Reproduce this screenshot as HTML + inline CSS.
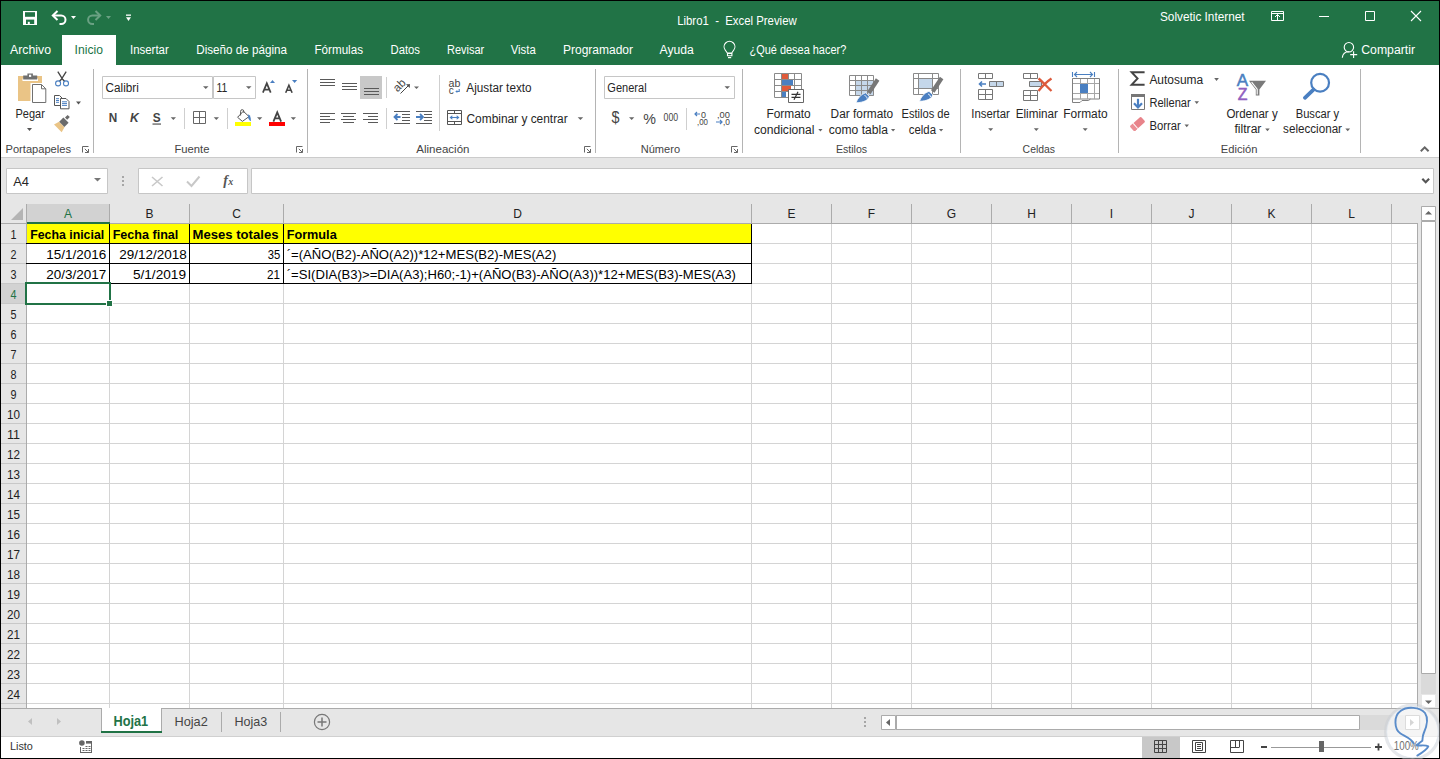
<!DOCTYPE html>
<html><head><meta charset="utf-8"><title>Libro1 - Excel Preview</title>
<style>html,body{margin:0;padding:0;width:1440px;height:759px;overflow:hidden;background:#000}
svg{display:block} text{font-family:"Liberation Sans",sans-serif;white-space:pre}</style></head>
<body><svg width="1440" height="759" viewBox="0 0 1440 759">
<rect x="0" y="0" width="1440" height="759" fill="#000" />
<rect x="1" y="1" width="1438" height="757" fill="#ffffff" />
<rect x="1" y="1" width="1438" height="64" fill="#217346" />
<rect x="62" y="35" width="54" height="30" fill="#ffffff" />
<rect x="1" y="157" width="1438" height="1" fill="#cbcbcb" />
<rect x="1" y="158" width="1438" height="579" fill="#e6e6e6" />
<rect x="23" y="11" width="14" height="14" fill="#fff" />
<rect x="25" y="12.2" width="10" height="4.6" fill="#217346" />
<rect x="26" y="19.6" width="8.2" height="4.4" fill="#217346" />
<rect x="27.8" y="21.8" width="2" height="2.2" fill="#fff" />
<path d="M57.5 11L52.8 15.5L57.5 20" stroke="#fff" fill="none" stroke-width="2" />
<path d="M53 15.5H61.2A4.3 4.3 0 0 1 61.2 24.1H59.5" stroke="#fff" fill="none" stroke-width="2" />
<path d="M71 16h5l-2.5 3z" stroke="none" fill="#fff" stroke-width="1" />
<path d="M95.5 11L100.2 15.5L95.5 20" stroke="#6aa183" fill="none" stroke-width="2" />
<path d="M100 15.5H92.4A4.3 4.3 0 0 0 92.4 24.1H94" stroke="#6aa183" fill="none" stroke-width="2" />
<path d="M106 16h5l-2.5 3z" stroke="none" fill="#6aa183" stroke-width="1" />
<rect x="126" y="14.5" width="5" height="1.3" fill="#fff" />
<path d="M126 17.3h5l-2.5 3.7z" stroke="none" fill="#fff" stroke-width="1" />
<text x="677.2" y="25" font-size="12" fill="#fff" font-weight="400" text-anchor="start" textLength="119.5" lengthAdjust="spacingAndGlyphs" >Libro1  -  Excel Preview</text>
<text x="1160" y="21" font-size="12" fill="#fff" font-weight="400" text-anchor="start" textLength="84.6" lengthAdjust="spacingAndGlyphs" >Solvetic Internet</text>
<path d="M1271.5 11.5h12v9h-12z" stroke="#fff" fill="none" stroke-width="1" />
<rect x="1272" y="13" width="12" height="1" fill="#fff" />
<path d="M1277.5 20v-5.5M1275 17l2.5-2.5 2.5 2.5" stroke="#fff" fill="none" stroke-width="1" />
<rect x="1319" y="16" width="10" height="1" fill="#fff" />
<path d="M1365.5 11.5h9v9h-9z" stroke="#fff" fill="none" stroke-width="1" />
<path d="M1411 11L1421 21M1421 11L1411 21" stroke="#fff" fill="none" stroke-width="1.1" />
<text x="10" y="54" font-size="12.5" fill="#fff" font-weight="400" text-anchor="start" textLength="41" lengthAdjust="spacingAndGlyphs" >Archivo</text>
<text x="130" y="54" font-size="12.5" fill="#fff" font-weight="400" text-anchor="start" textLength="38.75" lengthAdjust="spacingAndGlyphs" >Insertar</text>
<text x="196.25" y="54" font-size="12.5" fill="#fff" font-weight="400" text-anchor="start" textLength="90.75" lengthAdjust="spacingAndGlyphs" >Diseño de página</text>
<text x="314.5" y="54" font-size="12.5" fill="#fff" font-weight="400" text-anchor="start" textLength="48.5" lengthAdjust="spacingAndGlyphs" >Fórmulas</text>
<text x="390.5" y="54" font-size="12.5" fill="#fff" font-weight="400" text-anchor="start" textLength="29.5" lengthAdjust="spacingAndGlyphs" >Datos</text>
<text x="447" y="54" font-size="12.5" fill="#fff" font-weight="400" text-anchor="start" textLength="37.25" lengthAdjust="spacingAndGlyphs" >Revisar</text>
<text x="510.75" y="54" font-size="12.5" fill="#fff" font-weight="400" text-anchor="start" textLength="25" lengthAdjust="spacingAndGlyphs" >Vista</text>
<text x="563" y="54" font-size="12.5" fill="#fff" font-weight="400" text-anchor="start" textLength="70" lengthAdjust="spacingAndGlyphs" >Programador</text>
<text x="659.5" y="54" font-size="12.5" fill="#fff" font-weight="400" text-anchor="start" textLength="34.25" lengthAdjust="spacingAndGlyphs" >Ayuda</text>
<text x="74.6" y="54" font-size="12.5" fill="#217346" font-weight="400" text-anchor="start" textLength="28.3" lengthAdjust="spacingAndGlyphs" >Inicio</text>
<path d="M727.3 53L725.2 50A5.4 5.4 0 1 1 733.8 50L731.7 53z" stroke="#fff" fill="none" stroke-width="1.1" />
<path d="M727.5 53.5h4.4v2.3h-4.4z" stroke="#fff" fill="none" stroke-width="1.1" />
<rect x="728" y="57" width="3.2" height="1.2" fill="#fff" />
<text x="749.5" y="54" font-size="12.5" fill="#fff" font-weight="400" text-anchor="start" textLength="96.75" lengthAdjust="spacingAndGlyphs" >¿Qué desea hacer?</text>
<circle cx="1348.9" cy="47.2" r="4.7" stroke="#fff" stroke-width="1.1" fill="none"/>
<path d="M1342.3 57.8c0.4-3.6 3-6 6.6-6" stroke="#fff" fill="none" stroke-width="1.1" />
<path d="M1353.6 51.3v6.6M1350.2 54.6h7" stroke="#fff" fill="none" stroke-width="1.1" />
<text x="1361.25" y="54" font-size="12.5" fill="#fff" font-weight="400" text-anchor="start" textLength="53.75" lengthAdjust="spacingAndGlyphs" >Compartir</text>
<path d="M18 76h24v25h-24z" stroke="none" fill="#eac486" stroke-width="1" />
<path d="M22.5 81v-2.5h4.5v-4.5h6v4.5h5v2.5z" stroke="none" fill="#fff" stroke-width="1" />
<path d="M23.2 79.6v-4h4.2v-2.2h5.5v2.2h4.3v4z" stroke="none" fill="#707070" stroke-width="1" />
<rect x="29" y="74.7" width="2.2" height="2.2" fill="#fff" />
<path d="M30.5 83h11.5l5.5 5.5v15.8h-17z" stroke="none" fill="#fff" stroke-width="1" />
<path d="M32.5 84.5h9l4.3 4.3v13.7h-13.3z" stroke="#707070" fill="#fff" stroke-width="1" />
<path d="M41.5 84.5v4.3h4.3" stroke="#707070" fill="none" stroke-width="1" />
<text x="15.5" y="118" font-size="12" fill="#262626" font-weight="400" text-anchor="start" textLength="29.3" lengthAdjust="spacingAndGlyphs" >Pegar</text>
<path d="M27 128h5l-2.5 3z" stroke="none" fill="#555" stroke-width="1" />
<path d="M57.8 71.6L62.8 79.5L64.8 81.5M66.2 71.6L61.2 79.5L59.2 81.5" stroke="#444" fill="none" stroke-width="1.3" />
<circle cx="58.1" cy="83.4" r="2.5" stroke="#4a7fc1" stroke-width="1.1" fill="#fff"/>
<circle cx="66" cy="83.4" r="2.5" stroke="#4a7fc1" stroke-width="1.1" fill="#fff"/>
<path d="M54.5 95.5h5l2.5 2.5v7.5h-7.5z" stroke="#555" fill="#fff" stroke-width="1" />
<path d="M60.5 98.5h5.5l3 3v7.3h-8.5z" stroke="#555" fill="#fff" stroke-width="1" />
<path d="M56 98.7h3M56 100.5h3M56 102.3h3M62 101.8h5M62 103.6h5M62 105.4h5" stroke="#4a7fc1" fill="none" stroke-width="1" />
<path d="M76 101.5h5l-2.5 3z" stroke="none" fill="#555" stroke-width="1" />
<path d="M54 124.5l5-2.8 5.5 5.5-2.8 5z" stroke="none" fill="#eac486" stroke-width="1" />
<path d="M59.2 121.8l4.2-4.2 5.2 5.2-4.2 4.2z" stroke="none" fill="#6a6a6a" stroke-width="1" />
<path d="M65 117.5l2.6-2.6 2.2 2.2-2.6 2.6z" stroke="none" fill="#6a6a6a" stroke-width="1" />
<text x="5.5" y="153" font-size="11.5" fill="#444444" font-weight="400" text-anchor="start" textLength="65.5" lengthAdjust="spacingAndGlyphs" >Portapapeles</text>
<path d="M82.5 152.5v-6h6" stroke="#666" fill="none" stroke-width="1" />
<path d="M84.8 148.8l3.5 3.5M85 152.5h3.5v-3.5" stroke="#666" fill="none" stroke-width="1" />
<rect x="93" y="69" width="1" height="84" fill="#b4b4b4" />
<path d="M102.5 76.5h110v22h-110z" stroke="#c6c6c6" fill="#fff" stroke-width="1" />
<text x="105.6" y="92" font-size="12" fill="#262626" font-weight="400" text-anchor="start" textLength="33.2" lengthAdjust="spacingAndGlyphs" >Calibri</text>
<path d="M203 86.3h5.5l-2.75 2.8z" stroke="none" fill="#666" stroke-width="1" />
<path d="M213.5 76.5h42v22h-42z" stroke="#c6c6c6" fill="#fff" stroke-width="1" />
<text x="216.5" y="92" font-size="12" fill="#262626" font-weight="400" text-anchor="start" textLength="10.8" lengthAdjust="spacingAndGlyphs" >11</text>
<path d="M246 86.3h5.5l-2.75 2.8z" stroke="none" fill="#666" stroke-width="1" />
<path d="M262.9 92.7L266.8 83.3L270.7 92.7M264.2 89.6h5.2" stroke="#444" fill="none" stroke-width="1.7" />
<path d="M270 83l2.5-3 2.5 3z" stroke="none" fill="#4a7fc1" stroke-width="1" />
<path d="M285.7 92.7L288.9 85.3L292.1 92.7M286.8 90.3h4.2" stroke="#444" fill="none" stroke-width="1.6" />
<path d="M292 80h5.2l-2.6 3z" stroke="none" fill="#4a7fc1" stroke-width="1" />
<text x="108.8" y="122" font-size="12" fill="#444" font-weight="700" text-anchor="start" textLength="8.5" lengthAdjust="spacingAndGlyphs" >N</text>
<text x="130" y="122" font-size="12" fill="#444" font-weight="700" text-anchor="start" textLength="8.8" lengthAdjust="spacingAndGlyphs" font-style="italic">K</text>
<text x="152.8" y="122" font-size="12" fill="#444" font-weight="700" text-anchor="start" textLength="7.9" lengthAdjust="spacingAndGlyphs" >S</text>
<rect x="152.5" y="123.5" width="8.5" height="1.1" fill="#444" />
<path d="M170.7 117.3h5.3l-2.65 2.8z" stroke="none" fill="#666" stroke-width="1" />
<rect x="184" y="108" width="1" height="21" fill="#cfcfcf" />
<path d="M193.5 111.5h12v12h-12zM199.5 111.5v12M193.5 117.5h12" stroke="#666" fill="none" stroke-width="1" />
<path d="M213.7 117.3h5.3l-2.65 2.8z" stroke="none" fill="#666" stroke-width="1" />
<rect x="227" y="108" width="1" height="21" fill="#cfcfcf" />
<path d="M237.6 117.3L243.3 111.2L249 116.6L242.4 121.4z" stroke="#555" fill="#fff" stroke-width="1" />
<path d="M240.6 115.5v-4.2a1.6 1.6 0 0 1 3.2 0v1.5" stroke="#555" fill="none" stroke-width="1" />
<path d="M248.2 114.2c2 1 2.9 3.4 2.6 7c-1.2-0.6-2.2-1.9-2.6-3.5z" stroke="none" fill="#4a7fc1" stroke-width="1" />
<rect x="235" y="122" width="16" height="4" fill="#ffff00" />
<path d="M257 117.3h5.3l-2.65 2.8z" stroke="none" fill="#666" stroke-width="1" />
<path d="M273.4 121.7L277.25 112.4L281.1 121.7M274.7 118.4h5.1" stroke="#444" fill="none" stroke-width="1.8" />
<rect x="269" y="122" width="16" height="4" fill="#ff0000" />
<path d="M290.7 117.3h5.3l-2.65 2.8z" stroke="none" fill="#666" stroke-width="1" />
<text x="174.5" y="152.6" font-size="11.5" fill="#444444" font-weight="400" text-anchor="start" textLength="35" lengthAdjust="spacingAndGlyphs" >Fuente</text>
<path d="M296.5 152.5v-6h6" stroke="#666" fill="none" stroke-width="1" />
<path d="M298.8 148.8l3.5 3.5M299 152.5h3.5v-3.5" stroke="#666" fill="none" stroke-width="1" />
<rect x="307" y="69" width="1" height="84" fill="#b4b4b4" />
<rect x="320" y="79" width="15" height="1" fill="#595959" />
<rect x="320" y="82" width="15" height="1" fill="#595959" />
<rect x="320" y="85" width="15" height="1" fill="#595959" />
<rect x="342" y="83" width="15" height="1" fill="#595959" />
<rect x="342" y="86" width="15" height="1" fill="#595959" />
<rect x="342" y="89" width="15" height="1" fill="#595959" />
<rect x="360" y="76" width="22" height="23" fill="#c8c8c8" />
<rect x="364" y="88" width="15" height="1" fill="#595959" />
<rect x="364" y="91" width="15" height="1" fill="#595959" />
<rect x="364" y="94" width="15" height="1" fill="#595959" />
<rect x="386" y="77" width="1" height="21" fill="#cfcfcf" />
<text x="397.5" y="92.5" font-size="11.5" fill="#444" font-weight="400" text-anchor="start" transform="rotate(-45 397.5 92.5)">ab</text>
<path d="M400.5 93.5L409.5 84.5" stroke="#444" fill="none" stroke-width="1" />
<path d="M406 84.3h3.8v3.8z" stroke="none" fill="#444" stroke-width="1" />
<path d="M414 86.5h5l-2.5 2.5z" stroke="none" fill="#666" stroke-width="1" />
<rect x="320" y="113" width="15" height="1" fill="#595959" />
<rect x="320" y="116" width="10" height="1" fill="#595959" />
<rect x="320" y="119" width="15" height="1" fill="#595959" />
<rect x="320" y="122" width="10" height="1" fill="#595959" />
<rect x="341" y="113" width="15" height="1" fill="#595959" />
<rect x="343" y="116" width="11" height="1" fill="#595959" />
<rect x="341" y="119" width="15" height="1" fill="#595959" />
<rect x="343" y="122" width="11" height="1" fill="#595959" />
<rect x="363" y="113" width="15" height="1" fill="#595959" />
<rect x="368" y="116" width="10" height="1" fill="#595959" />
<rect x="363" y="119" width="15" height="1" fill="#595959" />
<rect x="368" y="122" width="10" height="1" fill="#595959" />
<rect x="386" y="108" width="1" height="21" fill="#cfcfcf" />
<rect x="394" y="111" width="16" height="1" fill="#595959" />
<rect x="394" y="123" width="16" height="1" fill="#595959" />
<rect x="402" y="114" width="8" height="1" fill="#595959" />
<rect x="402" y="117" width="8" height="1" fill="#595959" />
<rect x="402" y="120" width="8" height="1" fill="#595959" />
<path d="M394.5 117h6M397.5 114l-3 3 3 3" stroke="#4a7fc1" fill="none" stroke-width="1.8" />
<rect x="416" y="111" width="16" height="1" fill="#595959" />
<rect x="416" y="123" width="16" height="1" fill="#595959" />
<rect x="424" y="114" width="8" height="1" fill="#595959" />
<rect x="424" y="117" width="8" height="1" fill="#595959" />
<rect x="424" y="120" width="8" height="1" fill="#595959" />
<path d="M416 117h6.5M420 114l3 3-3 3" stroke="#4a7fc1" fill="none" stroke-width="1.8" />
<rect x="439" y="75" width="1" height="56" fill="#cfcfcf" />
<text x="448.6" y="86.6" font-size="10" fill="#444" font-weight="400" text-anchor="start" textLength="11.8" lengthAdjust="spacingAndGlyphs" >ab</text>
<text x="448.8" y="94" font-size="10" fill="#444" font-weight="400" text-anchor="start" >c</text>
<path d="M459.2 89v2.5h-3.2" stroke="#4a7fc1" fill="none" stroke-width="1.1" />
<path d="M455.3 91.5l2-1.6v3.2z" stroke="none" fill="#4a7fc1" stroke-width="1" />
<text x="466.3" y="92" font-size="12" fill="#262626" font-weight="400" text-anchor="start" textLength="65.3" lengthAdjust="spacingAndGlyphs" >Ajustar texto</text>
<path d="M447.5 110.5h14v14h-14zM447.5 113.5h14M447.5 121.5h14M454.5 110.5v3M454.5 121.5v3" stroke="#555" fill="none" stroke-width="1" />
<path d="M451.5 117.5h6" stroke="#4a7fc1" fill="none" stroke-width="1.1" />
<path d="M449.5 117.5l2.8-2.3v4.6zM459.5 117.5l-2.8-2.3v4.6z" stroke="none" fill="#4a7fc1" stroke-width="1" />
<text x="466.5" y="122.8" font-size="12" fill="#262626" font-weight="400" text-anchor="start" textLength="101.2" lengthAdjust="spacingAndGlyphs" >Combinar y centrar</text>
<path d="M577.7 117.3h5.5l-2.75 2.8z" stroke="none" fill="#666" stroke-width="1" />
<text x="416.25" y="153" font-size="11.5" fill="#444444" font-weight="400" text-anchor="start" textLength="53.25" lengthAdjust="spacingAndGlyphs" >Alineación</text>
<path d="M584.5 152.5v-6h6" stroke="#666" fill="none" stroke-width="1" />
<path d="M586.8 148.8l3.5 3.5M587 152.5h3.5v-3.5" stroke="#666" fill="none" stroke-width="1" />
<rect x="595" y="69" width="1" height="84" fill="#b4b4b4" />
<path d="M604.5 76.5h130v22h-130z" stroke="#c6c6c6" fill="#fff" stroke-width="1" />
<text x="607.3" y="92" font-size="12" fill="#262626" font-weight="400" text-anchor="start" textLength="39.3" lengthAdjust="spacingAndGlyphs" >General</text>
<path d="M724.5 86.3h5.5l-2.75 2.8z" stroke="none" fill="#666" stroke-width="1" />
<text x="611.5" y="123.2" font-size="16.5" fill="#444" font-weight="400" text-anchor="start" textLength="8" lengthAdjust="spacingAndGlyphs" >$</text>
<path d="M629 117.3h5.3l-2.65 2.8z" stroke="none" fill="#666" stroke-width="1" />
<text x="643.3" y="123.8" font-size="14" fill="#444" font-weight="400" text-anchor="start" textLength="12.7" lengthAdjust="spacingAndGlyphs" >%</text>
<text x="663.6" y="121" font-size="10.5" fill="#444" font-weight="400" text-anchor="start" textLength="14.6" lengthAdjust="spacingAndGlyphs" >000</text>
<rect x="686" y="108" width="1" height="22" fill="#cfcfcf" />
<path d="M695 114h5M697 112l-2 2 2 2" stroke="#4a7fc1" fill="none" stroke-width="1.2" />
<text x="701" y="118" font-size="8.5" fill="#444" font-weight="400" text-anchor="start" textLength="5" lengthAdjust="spacingAndGlyphs" >0</text>
<text x="697" y="125" font-size="8.5" fill="#444" font-weight="400" text-anchor="start" textLength="11" lengthAdjust="spacingAndGlyphs" >,00</text>
<text x="717" y="118" font-size="8.5" fill="#444" font-weight="400" text-anchor="start" textLength="13" lengthAdjust="spacingAndGlyphs" >,00</text>
<path d="M716 122h6M720 120l2 2-2 2" stroke="#4a7fc1" fill="none" stroke-width="1.2" />
<text x="723" y="125" font-size="8.5" fill="#444" font-weight="400" text-anchor="start" textLength="7" lengthAdjust="spacingAndGlyphs" >,0</text>
<text x="640.7" y="153" font-size="11.5" fill="#444444" font-weight="400" text-anchor="start" textLength="39.4" lengthAdjust="spacingAndGlyphs" >Número</text>
<path d="M731.5 152.5v-6h6" stroke="#666" fill="none" stroke-width="1" />
<path d="M733.8 148.8l3.5 3.5M734 152.5h3.5v-3.5" stroke="#666" fill="none" stroke-width="1" />
<rect x="742" y="69" width="1" height="84" fill="#b4b4b4" />
<path d="M774.5 73.5h27v24h-27zM774.5 79.5h27M774.5 85.5h27M774.5 91.5h27M781.5 73.5v24M788.5 73.5v24M794.5 73.5v24" stroke="#8a8a8a" fill="#fff" stroke-width="1" />
<rect x="782" y="74" width="6" height="5" fill="#e05a3a" />
<rect x="782" y="80" width="11" height="5" fill="#4a7fc1" />
<rect x="782" y="86" width="9" height="5" fill="#e05a3a" />
<rect x="782" y="92" width="4" height="5" fill="#4a7fc1" />
<path d="M788.5 89.5h15v13h-15z" stroke="#666" fill="#fff" stroke-width="1" />
<path d="M791.5 94.3h9M791.5 97.3h9M798 91.8l-4 8" stroke="#333" fill="none" stroke-width="1.2" />
<text x="766.4" y="117.7" font-size="12" fill="#262626" font-weight="400" text-anchor="start" textLength="44.3" lengthAdjust="spacingAndGlyphs" >Formato</text>
<text x="753.9" y="133.8" font-size="12" fill="#262626" font-weight="400" text-anchor="start" textLength="60.6" lengthAdjust="spacingAndGlyphs" >condicional</text>
<path d="M818.3 129h4.2l-2.1 2.5z" stroke="none" fill="#666" stroke-width="1" />
<rect x="849" y="75" width="25" height="21" fill="#fff" />
<rect x="855" y="81" width="19" height="15" fill="#c5d7ea" />
<path d="M849.5 75.5h24v20h-24zM849.5 80.5h24M849.5 85.5h24M849.5 90.5h24M855.5 75.5v20M861.5 75.5v20M867.5 75.5v20" stroke="#8a8a8a" fill="none" stroke-width="1" />
<path d="M879.4 80.8L875.9 78.3L867 91.8L870.5 94.2z" stroke="none" fill="#777" stroke-width="1" />
<path d="M856 102.8C857.5 98.5 860.5 94.5 865.5 92.8L869.3 96.3C868.5 100 864 102.5 856 102.8z" stroke="#fff" fill="#4a7fc1" stroke-width="0.8" />
<path d="M864.5 95.5c1.5 0.5 2.5 1.5 2.5 3" stroke="#fff" fill="none" stroke-width="0.9" />
<text x="830.6" y="117.7" font-size="12" fill="#262626" font-weight="400" text-anchor="start" textLength="62.6" lengthAdjust="spacingAndGlyphs" >Dar formato</text>
<text x="828.7" y="133.8" font-size="12" fill="#262626" font-weight="400" text-anchor="start" textLength="59.2" lengthAdjust="spacingAndGlyphs" >como tabla</text>
<path d="M891 129h4.2l-2.1 2.5z" stroke="none" fill="#666" stroke-width="1" />
<rect x="913" y="73" width="26" height="22" fill="#fff" />
<rect x="919" y="79" width="14" height="10" fill="#c5d7ea" />
<path d="M913.5 73.5h25v21h-25zM913.5 78.5h25M913.5 88.5h25M918.5 73.5v21M932.5 73.5v21" stroke="#8a8a8a" fill="none" stroke-width="1" />
<path d="M943.4 79.3L939.9 76.8L931 90.3L934.5 92.7z" stroke="none" fill="#777" stroke-width="1" />
<path d="M919.5 101.3C921 97 924 93 929 91.3L932.8 94.8C932 98.5 927.5 101 919.5 101.3z" stroke="#fff" fill="#4a7fc1" stroke-width="0.8" />
<path d="M928 94c1.5 0.5 2.5 1.5 2.5 3" stroke="#fff" fill="none" stroke-width="0.9" />
<text x="901.6" y="117.7" font-size="12" fill="#262626" font-weight="400" text-anchor="start" textLength="48.1" lengthAdjust="spacingAndGlyphs" >Estilos de</text>
<text x="908.8" y="133.8" font-size="12" fill="#262626" font-weight="400" text-anchor="start" textLength="27.2" lengthAdjust="spacingAndGlyphs" >celda</text>
<path d="M939 129h4.2l-2.1 2.5z" stroke="none" fill="#666" stroke-width="1" />
<text x="835.9" y="153" font-size="11.5" fill="#444444" font-weight="400" text-anchor="start" textLength="31.3" lengthAdjust="spacingAndGlyphs" >Estilos</text>
<rect x="960" y="69" width="1" height="84" fill="#b4b4b4" />
<path d="M978.5 73.5h14v5h-14zM985.5 73.5v5M978.5 89.5h14v10h-14zM978.5 94.5h14M985.5 89.5v10" stroke="#777" fill="none" stroke-width="1" />
<path d="M989.5 81.5h14v5h-14z" stroke="#777" fill="#c5d7ea" stroke-width="1" />
<rect x="996" y="82" width="1" height="5" fill="#777" />
<path d="M986 84h-6M982 81.5l-2.5 2.5 2.5 2.5" stroke="#4a7fc1" fill="none" stroke-width="1.6" />
<text x="971.3" y="118" font-size="12" fill="#262626" font-weight="400" text-anchor="start" textLength="38.5" lengthAdjust="spacingAndGlyphs" >Insertar</text>
<path d="M988.2 128.2h5l-2.5 2.8z" stroke="none" fill="#666" stroke-width="1" />
<path d="M1023.5 73.5h14v5h-14zM1030.5 73.5v5M1023.5 90.5h14v10h-14zM1023.5 95.5h14M1030.5 90.5v10" stroke="#777" fill="none" stroke-width="1" />
<path d="M1029.5 81.5h12v5h-12z" stroke="#777" fill="#c5d7ea" stroke-width="1" />
<path d="M1038.5 78.5c4 3 8 8 13 12.5M1051.5 78.5c-4.5 3-9 7.5-13 12.5" stroke="#dc5a3c" fill="none" stroke-width="2.3" />
<text x="1015.7" y="118" font-size="12" fill="#262626" font-weight="400" text-anchor="start" textLength="42.2" lengthAdjust="spacingAndGlyphs" >Eliminar</text>
<path d="M1033.8 128.2h5l-2.5 2.8z" stroke="none" fill="#666" stroke-width="1" />
<path d="M1072.5 72v5M1094.5 72v5M1074 74.5h19M1077 72l-2.5 2.5 2.5 2.5M1090 72l2.5 2.5-2.5 2.5" stroke="#4a7fc1" fill="none" stroke-width="1.1" />
<path d="M1072.5 78.5h27v20.5h-27z" stroke="#808080" fill="#fff" stroke-width="1" />
<path d="M1073 83.5h26M1073 93.5h26M1080.5 79v20M1087.5 79v20M1094.5 79v20" stroke="#a6a6a6" fill="none" stroke-width="1" />
<rect x="1080" y="84" width="8" height="9" fill="#4a7fc1" />
<path d="M1072.5 99v3.5h7.5l2-2h6.5l2-1.5" stroke="#808080" fill="none" stroke-width="1" />
<text x="1063.3" y="118" font-size="12" fill="#262626" font-weight="400" text-anchor="start" textLength="44.4" lengthAdjust="spacingAndGlyphs" >Formato</text>
<path d="M1082.7 128.2h5l-2.5 2.8z" stroke="none" fill="#666" stroke-width="1" />
<text x="1022.6" y="153" font-size="11.5" fill="#444444" font-weight="400" text-anchor="start" textLength="32.5" lengthAdjust="spacingAndGlyphs" >Celdas</text>
<rect x="1118" y="69" width="1" height="84" fill="#b4b4b4" />
<path d="M1144.6 72.2H1131.6L1137.6 78.5L1131.6 84.8H1144.6" stroke="#444" fill="none" stroke-width="1.9" />
<text x="1149.4" y="84" font-size="12" fill="#262626" font-weight="400" text-anchor="start" textLength="53.8" lengthAdjust="spacingAndGlyphs" >Autosuma</text>
<path d="M1214.2 78.1h4.7l-2.35 2.8z" stroke="none" fill="#666" stroke-width="1" />
<path d="M1131.5 94.5h13v15h-13z" stroke="#777" fill="#fff" stroke-width="1" />
<rect x="1131" y="94" width="14" height="3" fill="#777" />
<path d="M1138 98.8v7.5" stroke="#4a7fc1" fill="none" stroke-width="2.2" />
<path d="M1134 103.2l4 4.3 4-4.3" stroke="#4a7fc1" fill="none" stroke-width="2.2" />
<text x="1149.4" y="106.7" font-size="12" fill="#262626" font-weight="400" text-anchor="start" textLength="41.3" lengthAdjust="spacingAndGlyphs" >Rellenar</text>
<path d="M1194.5 101.3h4.5l-2.25 2.7z" stroke="none" fill="#666" stroke-width="1" />
<g transform="rotate(-42 1137.6 124)"><rect x="1130.2" y="120.6" width="14.8" height="6.8" rx="1.2" fill="#e8838a"/><rect x="1130.2" y="120.6" width="4.5" height="6.8" rx="1.2" fill="#eb8f95"/><rect x="1134.2" y="120.6" width="1" height="6.8" fill="#fff"/></g>
<text x="1149.4" y="129.5" font-size="12" fill="#262626" font-weight="400" text-anchor="start" textLength="31.3" lengthAdjust="spacingAndGlyphs" >Borrar</text>
<path d="M1184.5 124.5h4.5l-2.25 2.7z" stroke="none" fill="#666" stroke-width="1" />
<text x="1236.8" y="85.5" font-size="16.3" fill="#4a7fc1" font-weight="400" text-anchor="start" textLength="11.4" lengthAdjust="spacingAndGlyphs" stroke="#4a7fc1" stroke-width="0.5">A</text>
<text x="1237.8" y="99.6" font-size="16.3" fill="#9060c0" font-weight="400" text-anchor="start" textLength="9.7" lengthAdjust="spacingAndGlyphs" stroke="#9060c0" stroke-width="0.5">Z</text>
<path d="M1249 80.8h17l-6.6 8.6v6.2h-3.6v-6.2z" stroke="none" fill="#7a7a7a" stroke-width="1" />
<path d="M1251.6 82.2l5.6 7v5.4" stroke="#fff" fill="none" stroke-width="1.1" />
<text x="1226.4" y="117.6" font-size="12" fill="#262626" font-weight="400" text-anchor="start" textLength="51.3" lengthAdjust="spacingAndGlyphs" >Ordenar y</text>
<text x="1234.5" y="133.2" font-size="12" fill="#262626" font-weight="400" text-anchor="start" textLength="26.9" lengthAdjust="spacingAndGlyphs" >filtrar</text>
<path d="M1265.2 128.5h4.5l-2.25 2.7z" stroke="none" fill="#666" stroke-width="1" />
<circle cx="1320.1" cy="82.8" r="8.9" stroke="#4a7fc1" stroke-width="2.2" fill="none"/>
<path d="M1313.5 89.6l-8.6 8.2" stroke="#4a7fc1" fill="none" stroke-width="3.8" stroke-linecap="round"/>
<text x="1295.7" y="117.6" font-size="12" fill="#262626" font-weight="400" text-anchor="start" textLength="43.4" lengthAdjust="spacingAndGlyphs" >Buscar y</text>
<text x="1283.1" y="133.2" font-size="12" fill="#262626" font-weight="400" text-anchor="start" textLength="58.9" lengthAdjust="spacingAndGlyphs" >seleccionar</text>
<path d="M1345.3 128.5h4.8l-2.4 2.7z" stroke="none" fill="#666" stroke-width="1" />
<text x="1220.8" y="153" font-size="11.5" fill="#444444" font-weight="400" text-anchor="start" textLength="36.6" lengthAdjust="spacingAndGlyphs" >Edición</text>
<rect x="1360" y="69" width="1" height="84" fill="#b4b4b4" />
<path d="M1420.8 151.3l3.9-3.9 3.9 3.9" stroke="#666" fill="none" stroke-width="2" />
<path d="M6.5 168.5h101v25h-101z" stroke="#c6c6c6" fill="#fff" stroke-width="1" />
<text x="13.2" y="186" font-size="12.5" fill="#262626" font-weight="400" text-anchor="start" textLength="15.8" lengthAdjust="spacingAndGlyphs" >A4</text>
<path d="M94 178h7l-3.5 3.6z" stroke="none" fill="#777" stroke-width="1" />
<rect x="122" y="176" width="2" height="2" fill="#a6a6a6" />
<rect x="122" y="180" width="2" height="2" fill="#a6a6a6" />
<rect x="122" y="184" width="2" height="2" fill="#a6a6a6" />
<path d="M138.5 168.5h109v25h-109z" stroke="#c6c6c6" fill="#fff" stroke-width="1" />
<path d="M152 177l10.5 9M162.5 177l-10.5 9" stroke="#c8c8c8" fill="none" stroke-width="1.6" />
<path d="M187 181.5l4.5 4.5 8-9.5" stroke="#c8c8c8" fill="none" stroke-width="2" />
<text x="223.2" y="184.6" font-size="14" fill="#555" font-weight="700" text-anchor="start" style="font-family:&quot;Liberation Serif&quot;,serif" font-style="italic">f</text>
<text x="228.2" y="185" font-size="10" fill="#555" font-weight="700" text-anchor="start" style="font-family:&quot;Liberation Serif&quot;,serif" font-style="italic">x</text>
<path d="M251.5 168.5h1182v25h-1182z" stroke="#c6c6c6" fill="#fff" stroke-width="1" />
<path d="M1422.3 178.8l3.4 3.4 3.4-3.4" stroke="#555" fill="none" stroke-width="2.2" />
<rect x="27" y="204" width="82" height="19" fill="#d2d2d2" />
<rect x="26" y="204" width="1" height="19" fill="#ababab" />
<rect x="109" y="204" width="1" height="19" fill="#ababab" />
<rect x="189" y="204" width="1" height="19" fill="#ababab" />
<rect x="283" y="204" width="1" height="19" fill="#ababab" />
<rect x="751" y="204" width="1" height="19" fill="#ababab" />
<rect x="831" y="204" width="1" height="19" fill="#ababab" />
<rect x="911" y="204" width="1" height="19" fill="#ababab" />
<rect x="991" y="204" width="1" height="19" fill="#ababab" />
<rect x="1071" y="204" width="1" height="19" fill="#ababab" />
<rect x="1151" y="204" width="1" height="19" fill="#ababab" />
<rect x="1231" y="204" width="1" height="19" fill="#ababab" />
<rect x="1311" y="204" width="1" height="19" fill="#ababab" />
<rect x="1391" y="204" width="1" height="19" fill="#ababab" />
<rect x="1" y="223" width="1417" height="1" fill="#ababab" />
<rect x="26" y="222" width="84" height="2" fill="#217346" />
<text x="68.0" y="217.5" font-size="12" fill="#217346" font-weight="400" text-anchor="middle" >A</text>
<text x="149.5" y="217.5" font-size="12" fill="#222" font-weight="400" text-anchor="middle" >B</text>
<text x="236.5" y="217.5" font-size="12" fill="#222" font-weight="400" text-anchor="middle" >C</text>
<text x="517.5" y="217.5" font-size="12" fill="#222" font-weight="400" text-anchor="middle" >D</text>
<text x="791.5" y="217.5" font-size="12" fill="#222" font-weight="400" text-anchor="middle" >E</text>
<text x="871.5" y="217.5" font-size="12" fill="#222" font-weight="400" text-anchor="middle" >F</text>
<text x="951.5" y="217.5" font-size="12" fill="#222" font-weight="400" text-anchor="middle" >G</text>
<text x="1031.5" y="217.5" font-size="12" fill="#222" font-weight="400" text-anchor="middle" >H</text>
<text x="1111.5" y="217.5" font-size="12" fill="#222" font-weight="400" text-anchor="middle" >I</text>
<text x="1191.5" y="217.5" font-size="12" fill="#222" font-weight="400" text-anchor="middle" >J</text>
<text x="1271.5" y="217.5" font-size="12" fill="#222" font-weight="400" text-anchor="middle" >K</text>
<text x="1351.5" y="217.5" font-size="12" fill="#222" font-weight="400" text-anchor="middle" >L</text>
<path d="M11 220h12v-12z" stroke="none" fill="#b4b4b4" stroke-width="1" />
<rect x="26" y="204" width="1" height="504" fill="#ababab" />
<rect x="1" y="284" width="25" height="19" fill="#d2d2d2" />
<rect x="1" y="243" width="25" height="1" fill="#c8c8c8" />
<rect x="1" y="263" width="25" height="1" fill="#c8c8c8" />
<rect x="1" y="283" width="25" height="1" fill="#c8c8c8" />
<rect x="1" y="303" width="25" height="1" fill="#c8c8c8" />
<rect x="1" y="323" width="25" height="1" fill="#c8c8c8" />
<rect x="1" y="343" width="25" height="1" fill="#c8c8c8" />
<rect x="1" y="363" width="25" height="1" fill="#c8c8c8" />
<rect x="1" y="383" width="25" height="1" fill="#c8c8c8" />
<rect x="1" y="403" width="25" height="1" fill="#c8c8c8" />
<rect x="1" y="423" width="25" height="1" fill="#c8c8c8" />
<rect x="1" y="443" width="25" height="1" fill="#c8c8c8" />
<rect x="1" y="463" width="25" height="1" fill="#c8c8c8" />
<rect x="1" y="483" width="25" height="1" fill="#c8c8c8" />
<rect x="1" y="503" width="25" height="1" fill="#c8c8c8" />
<rect x="1" y="523" width="25" height="1" fill="#c8c8c8" />
<rect x="1" y="543" width="25" height="1" fill="#c8c8c8" />
<rect x="1" y="563" width="25" height="1" fill="#c8c8c8" />
<rect x="1" y="583" width="25" height="1" fill="#c8c8c8" />
<rect x="1" y="603" width="25" height="1" fill="#c8c8c8" />
<rect x="1" y="623" width="25" height="1" fill="#c8c8c8" />
<rect x="1" y="643" width="25" height="1" fill="#c8c8c8" />
<rect x="1" y="663" width="25" height="1" fill="#c8c8c8" />
<rect x="1" y="683" width="25" height="1" fill="#c8c8c8" />
<rect x="1" y="703" width="25" height="1" fill="#c8c8c8" />
<text x="13.5" y="239" font-size="12.5" fill="#222" font-weight="400" text-anchor="middle" textLength="6" lengthAdjust="spacingAndGlyphs" >1</text>
<text x="13.5" y="259" font-size="12.5" fill="#222" font-weight="400" text-anchor="middle" textLength="6" lengthAdjust="spacingAndGlyphs" >2</text>
<text x="13.5" y="279" font-size="12.5" fill="#222" font-weight="400" text-anchor="middle" textLength="6" lengthAdjust="spacingAndGlyphs" >3</text>
<text x="13.5" y="299" font-size="12.5" fill="#217346" font-weight="400" text-anchor="middle" textLength="6" lengthAdjust="spacingAndGlyphs" >4</text>
<text x="13.5" y="319" font-size="12.5" fill="#222" font-weight="400" text-anchor="middle" textLength="6" lengthAdjust="spacingAndGlyphs" >5</text>
<text x="13.5" y="339" font-size="12.5" fill="#222" font-weight="400" text-anchor="middle" textLength="6" lengthAdjust="spacingAndGlyphs" >6</text>
<text x="13.5" y="359" font-size="12.5" fill="#222" font-weight="400" text-anchor="middle" textLength="6" lengthAdjust="spacingAndGlyphs" >7</text>
<text x="13.5" y="379" font-size="12.5" fill="#222" font-weight="400" text-anchor="middle" textLength="6" lengthAdjust="spacingAndGlyphs" >8</text>
<text x="13.5" y="399" font-size="12.5" fill="#222" font-weight="400" text-anchor="middle" textLength="6" lengthAdjust="spacingAndGlyphs" >9</text>
<text x="13.5" y="419" font-size="12.5" fill="#222" font-weight="400" text-anchor="middle" textLength="13" lengthAdjust="spacingAndGlyphs" >10</text>
<text x="13.5" y="439" font-size="12.5" fill="#222" font-weight="400" text-anchor="middle" textLength="13" lengthAdjust="spacingAndGlyphs" >11</text>
<text x="13.5" y="459" font-size="12.5" fill="#222" font-weight="400" text-anchor="middle" textLength="13" lengthAdjust="spacingAndGlyphs" >12</text>
<text x="13.5" y="479" font-size="12.5" fill="#222" font-weight="400" text-anchor="middle" textLength="13" lengthAdjust="spacingAndGlyphs" >13</text>
<text x="13.5" y="499" font-size="12.5" fill="#222" font-weight="400" text-anchor="middle" textLength="13" lengthAdjust="spacingAndGlyphs" >14</text>
<text x="13.5" y="519" font-size="12.5" fill="#222" font-weight="400" text-anchor="middle" textLength="13" lengthAdjust="spacingAndGlyphs" >15</text>
<text x="13.5" y="539" font-size="12.5" fill="#222" font-weight="400" text-anchor="middle" textLength="13" lengthAdjust="spacingAndGlyphs" >16</text>
<text x="13.5" y="559" font-size="12.5" fill="#222" font-weight="400" text-anchor="middle" textLength="13" lengthAdjust="spacingAndGlyphs" >17</text>
<text x="13.5" y="579" font-size="12.5" fill="#222" font-weight="400" text-anchor="middle" textLength="13" lengthAdjust="spacingAndGlyphs" >18</text>
<text x="13.5" y="599" font-size="12.5" fill="#222" font-weight="400" text-anchor="middle" textLength="13" lengthAdjust="spacingAndGlyphs" >19</text>
<text x="13.5" y="619" font-size="12.5" fill="#222" font-weight="400" text-anchor="middle" textLength="13" lengthAdjust="spacingAndGlyphs" >20</text>
<text x="13.5" y="639" font-size="12.5" fill="#222" font-weight="400" text-anchor="middle" textLength="13" lengthAdjust="spacingAndGlyphs" >21</text>
<text x="13.5" y="659" font-size="12.5" fill="#222" font-weight="400" text-anchor="middle" textLength="13" lengthAdjust="spacingAndGlyphs" >22</text>
<text x="13.5" y="679" font-size="12.5" fill="#222" font-weight="400" text-anchor="middle" textLength="13" lengthAdjust="spacingAndGlyphs" >23</text>
<text x="13.5" y="699" font-size="12.5" fill="#222" font-weight="400" text-anchor="middle" textLength="13" lengthAdjust="spacingAndGlyphs" >24</text>
<rect x="27" y="224" width="1390" height="484" fill="#fff" />
<rect x="109" y="224" width="1" height="484" fill="#d4d4d4" />
<rect x="189" y="224" width="1" height="484" fill="#d4d4d4" />
<rect x="283" y="224" width="1" height="484" fill="#d4d4d4" />
<rect x="751" y="224" width="1" height="484" fill="#d4d4d4" />
<rect x="831" y="224" width="1" height="484" fill="#d4d4d4" />
<rect x="911" y="224" width="1" height="484" fill="#d4d4d4" />
<rect x="991" y="224" width="1" height="484" fill="#d4d4d4" />
<rect x="1071" y="224" width="1" height="484" fill="#d4d4d4" />
<rect x="1151" y="224" width="1" height="484" fill="#d4d4d4" />
<rect x="1231" y="224" width="1" height="484" fill="#d4d4d4" />
<rect x="1311" y="224" width="1" height="484" fill="#d4d4d4" />
<rect x="1391" y="224" width="1" height="484" fill="#d4d4d4" />
<rect x="27" y="243" width="1390" height="1" fill="#d4d4d4" />
<rect x="27" y="263" width="1390" height="1" fill="#d4d4d4" />
<rect x="27" y="283" width="1390" height="1" fill="#d4d4d4" />
<rect x="27" y="303" width="1390" height="1" fill="#d4d4d4" />
<rect x="27" y="323" width="1390" height="1" fill="#d4d4d4" />
<rect x="27" y="343" width="1390" height="1" fill="#d4d4d4" />
<rect x="27" y="363" width="1390" height="1" fill="#d4d4d4" />
<rect x="27" y="383" width="1390" height="1" fill="#d4d4d4" />
<rect x="27" y="403" width="1390" height="1" fill="#d4d4d4" />
<rect x="27" y="423" width="1390" height="1" fill="#d4d4d4" />
<rect x="27" y="443" width="1390" height="1" fill="#d4d4d4" />
<rect x="27" y="463" width="1390" height="1" fill="#d4d4d4" />
<rect x="27" y="483" width="1390" height="1" fill="#d4d4d4" />
<rect x="27" y="503" width="1390" height="1" fill="#d4d4d4" />
<rect x="27" y="523" width="1390" height="1" fill="#d4d4d4" />
<rect x="27" y="543" width="1390" height="1" fill="#d4d4d4" />
<rect x="27" y="563" width="1390" height="1" fill="#d4d4d4" />
<rect x="27" y="583" width="1390" height="1" fill="#d4d4d4" />
<rect x="27" y="603" width="1390" height="1" fill="#d4d4d4" />
<rect x="27" y="623" width="1390" height="1" fill="#d4d4d4" />
<rect x="27" y="643" width="1390" height="1" fill="#d4d4d4" />
<rect x="27" y="663" width="1390" height="1" fill="#d4d4d4" />
<rect x="27" y="683" width="1390" height="1" fill="#d4d4d4" />
<rect x="27" y="703" width="1390" height="1" fill="#d4d4d4" />
<rect x="1417" y="223" width="1" height="485" fill="#ababab" />
<rect x="27" y="224" width="724" height="19" fill="#ffff00" />
<rect x="26" y="243" width="726" height="1" fill="#000" />
<rect x="26" y="263" width="726" height="1" fill="#000" />
<rect x="26" y="283" width="726" height="1" fill="#000" />
<rect x="109" y="224" width="1" height="60" fill="#000" />
<rect x="189" y="224" width="1" height="60" fill="#000" />
<rect x="283" y="224" width="1" height="60" fill="#000" />
<rect x="751" y="224" width="1" height="60" fill="#000" />
<text x="30.2" y="239" font-size="13" fill="#000" font-weight="700" text-anchor="start" textLength="74" lengthAdjust="spacingAndGlyphs" >Fecha inicial</text>
<text x="112.7" y="239" font-size="13" fill="#000" font-weight="700" text-anchor="start" textLength="65.6" lengthAdjust="spacingAndGlyphs" >Fecha final</text>
<text x="192.5" y="239" font-size="13" fill="#000" font-weight="700" text-anchor="start" textLength="86" lengthAdjust="spacingAndGlyphs" >Meses totales</text>
<text x="286.7" y="239" font-size="13" fill="#000" font-weight="700" text-anchor="start" textLength="50" lengthAdjust="spacingAndGlyphs" >Formula</text>
<text x="46.25" y="259" font-size="13" fill="#000" font-weight="400" text-anchor="start" textLength="60" lengthAdjust="spacingAndGlyphs" >15/1/2016</text>
<text x="119.2" y="259" font-size="13" fill="#000" font-weight="400" text-anchor="start" textLength="67.6" lengthAdjust="spacingAndGlyphs" >29/12/2018</text>
<text x="267.7" y="259" font-size="13" fill="#000" font-weight="400" text-anchor="start" textLength="12.5" lengthAdjust="spacingAndGlyphs" >35</text>
<text x="286.7" y="259" font-size="13" fill="#000" font-weight="400" text-anchor="start" textLength="269.6" lengthAdjust="spacingAndGlyphs" >´=(AÑO(B2)-AÑO(A2))*12+MES(B2)-MES(A2)</text>
<text x="46.25" y="279" font-size="13" fill="#000" font-weight="400" text-anchor="start" textLength="60" lengthAdjust="spacingAndGlyphs" >20/3/2017</text>
<text x="132.9" y="279" font-size="13" fill="#000" font-weight="400" text-anchor="start" textLength="53.1" lengthAdjust="spacingAndGlyphs" >5/1/2019</text>
<text x="267" y="279" font-size="13" fill="#000" font-weight="400" text-anchor="start" textLength="13" lengthAdjust="spacingAndGlyphs" >21</text>
<text x="286.7" y="279" font-size="13" fill="#000" font-weight="400" text-anchor="start" textLength="449.3" lengthAdjust="spacingAndGlyphs" >´=SI(DIA(B3)&gt;=DIA(A3);H60;-1)+(AÑO(B3)-AÑO(A3))*12+MES(B3)-MES(A3)</text>
<rect x="25" y="282" width="86" height="2" fill="#217346" />
<rect x="25" y="282" width="2" height="23" fill="#217346" />
<rect x="109" y="282" width="2" height="18" fill="#217346" />
<rect x="25" y="303" width="81" height="2" fill="#217346" />
<rect x="106" y="300" width="7" height="7" fill="#fff" />
<rect x="107" y="301" width="5" height="5" fill="#217346" />
<rect x="1421" y="206" width="15" height="502" fill="#dadada" />
<path d="M1421.5 206.5h14v14h-14z" stroke="#ababab" fill="#fff" stroke-width="1" />
<path d="M1425 214.5h7l-3.5-3.5z" stroke="none" fill="#666" stroke-width="1" />
<path d="M1421.5 221.5h14v452h-14z" stroke="#ababab" fill="#fff" stroke-width="1" />
<path d="M1421.5 694.5h14v13h-14z" stroke="#e6e6e6" fill="#fff" stroke-width="1" />
<path d="M1425 700.5h7l-3.5 3.5z" stroke="none" fill="#666" stroke-width="1" />
<rect x="1" y="708" width="1438" height="1" fill="#ababab" />
<rect x="1" y="736" width="1438" height="1" fill="#d0d0d0" />
<path d="M32 718l-4 3.5 4 3.5z" stroke="none" fill="#c0c0c0" stroke-width="1" />
<path d="M57 718l4 3.5-4 3.5z" stroke="none" fill="#c0c0c0" stroke-width="1" />
<rect x="101" y="708" width="61" height="25" fill="#fff" />
<rect x="101" y="708" width="1" height="25" fill="#ababab" />
<rect x="161" y="708" width="1" height="25" fill="#ababab" />
<rect x="101" y="731" width="61" height="2" fill="#217346" />
<text x="113.5" y="726.2" font-size="14" fill="#217346" font-weight="700" text-anchor="start" textLength="34.6" lengthAdjust="spacingAndGlyphs" >Hoja1</text>
<text x="174.5" y="726.2" font-size="13.5" fill="#444" font-weight="400" text-anchor="start" textLength="33.2" lengthAdjust="spacingAndGlyphs" >Hoja2</text>
<rect x="221" y="712" width="1" height="20" fill="#ababab" />
<text x="234.5" y="726.2" font-size="13.5" fill="#444" font-weight="400" text-anchor="start" textLength="32.8" lengthAdjust="spacingAndGlyphs" >Hoja3</text>
<rect x="280" y="712" width="1" height="20" fill="#ababab" />
<circle cx="322" cy="722" r="7.6" stroke="#777" stroke-width="1.2" fill="none"/>
<path d="M322 717.5v9M317.5 722h9" stroke="#777" fill="none" stroke-width="1.5" />
<rect x="864" y="717" width="2" height="2" fill="#a6a6a6" />
<rect x="864" y="721" width="2" height="2" fill="#a6a6a6" />
<rect x="864" y="725" width="2" height="2" fill="#a6a6a6" />
<rect x="881" y="715" width="540" height="15" fill="#dadada" />
<path d="M881.5 715.5h14v14h-14z" stroke="#ababab" fill="#fff" stroke-width="1" />
<path d="M890 719v7l-4-3.5z" stroke="none" fill="#666" stroke-width="1" />
<path d="M896.5 715.5h463v14h-463z" stroke="#ababab" fill="#fff" stroke-width="1" />
<rect x="896" y="715" width="1" height="15" fill="#ababab" />
<path d="M1405.5 715.5h14v14h-14z" stroke="#a8a8a8" fill="#fff" stroke-width="1" />
<path d="M1410 719v7l4-3.5z" stroke="none" fill="#999" stroke-width="1" />
<text x="10" y="750" font-size="11.5" fill="#333" font-weight="400" text-anchor="start" textLength="22.9" lengthAdjust="spacingAndGlyphs" >Listo</text>
<circle cx="81.9" cy="743" r="2.8" fill="#666"/>
<rect x="86" y="741" width="6" height="2.6" fill="#666" />
<rect x="91" y="743" width="1" height="10" fill="#666" />
<rect x="80" y="752" width="12" height="1" fill="#666" />
<rect x="80" y="747" width="1" height="6" fill="#666" />
<rect x="85.5" y="746" width="2" height="1" fill="#666" />
<rect x="88.5" y="746" width="2" height="1" fill="#666" />
<rect x="82.5" y="748" width="2" height="1" fill="#666" />
<rect x="85.5" y="748" width="2" height="1" fill="#666" />
<rect x="88.5" y="748" width="2" height="1" fill="#666" />
<rect x="82.5" y="750" width="2" height="1" fill="#666" />
<rect x="85.5" y="750" width="2" height="1" fill="#666" />
<rect x="88.5" y="750" width="2" height="1" fill="#666" />
<rect x="1142" y="737" width="38" height="21" fill="#c8c8c8" />
<path d="M1154.5 740.5h12v12h-12zM1158.5 740.5v12M1162.5 740.5v12M1154.5 744.5h12M1154.5 748.5h12" stroke="#444" fill="none" stroke-width="1" />
<path d="M1192.5 740.5h13v12h-13z" stroke="#444" fill="none" stroke-width="1" />
<path d="M1195.5 742.5h7v8h-7z" stroke="#444" fill="none" stroke-width="1" />
<rect x="1197" y="744" width="4" height="1" fill="#444" />
<rect x="1197" y="746" width="4" height="1" fill="#444" />
<rect x="1197" y="748" width="4" height="1" fill="#444" />
<path d="M1230.5 740.5h13v12h-13zM1235.5 740.5v6.5M1239.5 740.5v6.5M1230.5 747.5h9" stroke="#444" fill="none" stroke-width="1" />
<rect x="1261" y="746" width="6" height="2" fill="#444" />
<rect x="1271" y="747" width="100" height="1" fill="#999" />
<rect x="1319" y="741" width="5" height="11" fill="#666" />
<path d="M1375 747h7M1378.5 743.5v7" stroke="#444" fill="none" stroke-width="1.8" />
<circle cx="1412.5" cy="732" r="27" fill="none" stroke="#c8ccd2" stroke-opacity="0.45" stroke-width="3"/>
<circle cx="1412.5" cy="732" r="25.8" fill="#ffffff" fill-opacity="0.6" stroke="#dfe5ec" stroke-opacity="0.8" stroke-width="1"/>
<text x="1393.8" y="750" font-size="12" fill="#707070" font-weight="400" text-anchor="start" textLength="25" lengthAdjust="spacingAndGlyphs" >100%</text>
<path d="M1413.8 743.5C1411 738 1405 736.5 1400.5 733.5C1394 729 1393.5 716 1400.5 711C1407 706 1420 707 1425 713C1429 719 1426.5 727 1423.8 733C1422 737 1422.8 739.5 1422.3 740.8L1416.5 745.3C1420 746 1425 744.5 1428.3 746.3C1427 749.5 1421.5 753 1417.3 755.6" stroke="#5a8cca" fill="none" stroke-width="1.9" stroke-linecap="round" stroke-linejoin="round"/>
</svg></body></html>
